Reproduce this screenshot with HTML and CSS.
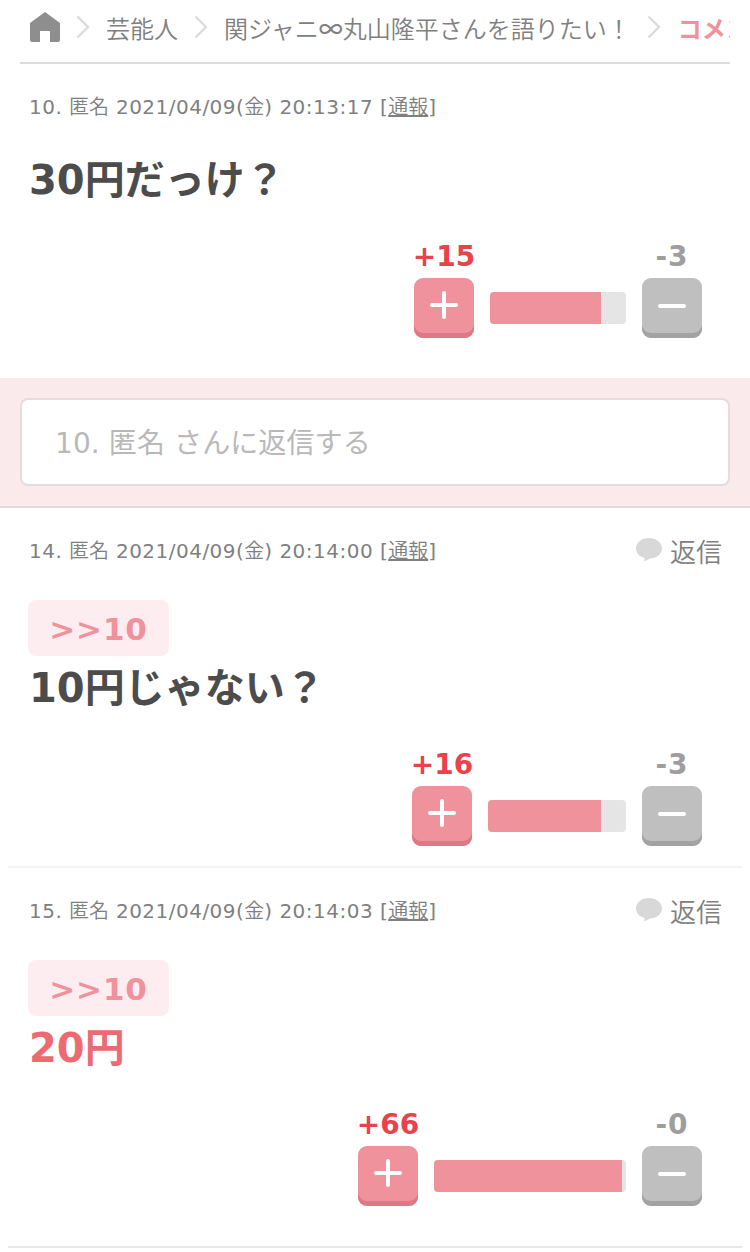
FILE: index.html
```html
<!DOCTYPE html>
<html lang="ja">
<head>
    <meta charset="UTF-8">
    <meta name="viewport" content="width=device-width, initial-scale=1.0">
    <title>関ジャニ∞丸山隆平さんを語りたい！</title>
    <link rel="stylesheet" href="styles.css">
</head>
<body>
    <svg class="sprite">
        <symbol id="home" viewBox="0 0 30 30">
            <path d="M15 0 L30 11 V28 Q30 30 28 30 H20 V19 H10 V30 H2 Q0 30 0 28 V11 Z" fill="#8e8e8e"/>
        </symbol>
        <symbol id="arrow" viewBox="0 0 14 24">
            <path d="M1.5 1.5 L12 12 L1.5 22.5" fill="none" stroke="#dcdcdc" stroke-width="2.4"/>
        </symbol>
        <symbol id="balloon" viewBox="0 0 26 23">
            <path d="M13 0 C20 0 26 4.5 26 10.5 C26 16.5 20 20.5 13.5 20.5 C12 21.8 10 22.8 7.5 23 C8.3 22 8.7 21 8.6 20 C3.5 18.5 0 15 0 10.5 C0 4.5 6 0 13 0 Z" fill="#d8d8d8"/>
        </symbol>
        <symbol id="plus" viewBox="0 0 28 28">
            <path d="M2 14 H26 M14 2 V26" stroke="#fff" stroke-width="4" stroke-linecap="round"/>
        </symbol>
        <symbol id="minus" viewBox="0 0 28 28">
            <path d="M2 15 H26" stroke="#fff" stroke-width="4" stroke-linecap="round"/>
        </symbol>
    </svg>

    <nav class="breadcrumb">
        <svg class="home"><use href="#home"/></svg>
        <svg class="arrow"><use href="#arrow"/></svg>
        <a>芸能人</a>
        <svg class="arrow"><use href="#arrow"/></svg>
        <a>関ジャニ<span class="infinity">∞</span>丸山隆平さんを語りたい！</a>
        <svg class="arrow"><use href="#arrow"/></svg>
        <a class="current">コメント</a>
    </nav>

    <div class="comment main-comment">
        <div class="comment-head">
            <p class="info">10. <span>匿名</span> 2021/04/09(<span>金</span>) 20:13:17 [<a>通報</a>]</p>
        </div>
        <div class="body">30円だっけ？</div>
        <div class="votes">
            <div class="vote plus">
                <span>+15</span>
                <button><svg><use href="#plus"/></svg></button>
            </div>
            <div class="bar" style="width: 136px"><div style="width: 111px"></div></div>
            <div class="vote minus">
                <span>-3</span>
                <button><svg><use href="#minus"/></svg></button>
            </div>
        </div>
    </div>

    <form class="reply-form">
        <input type="text" placeholder="10. 匿名 さんに返信する">
    </form>

    <div class="comment">
        <div class="comment-head">
            <p class="info">14. <span>匿名</span> 2021/04/09(<span>金</span>) 20:14:00 [<a>通報</a>]</p>
            <a class="reply"><svg><use href="#balloon"/></svg>返信</a>
        </div>
        <a class="anchor">&gt;&gt;10</a>
        <div class="body">10円じゃない？</div>
        <div class="votes">
            <div class="vote plus">
                <span>+16</span>
                <button><svg><use href="#plus"/></svg></button>
            </div>
            <div class="bar" style="width: 138px"><div style="width: 113px"></div></div>
            <div class="vote minus">
                <span>-3</span>
                <button><svg><use href="#minus"/></svg></button>
            </div>
        </div>
    </div>

    <div class="comment last">
        <div class="comment-head">
            <p class="info">15. <span>匿名</span> 2021/04/09(<span>金</span>) 20:14:03 [<a>通報</a>]</p>
            <a class="reply"><svg><use href="#balloon"/></svg>返信</a>
        </div>
        <a class="anchor">&gt;&gt;10</a>
        <div class="body popular">20円</div>
        <div class="votes">
            <div class="vote plus">
                <span>+66</span>
                <button><svg><use href="#plus"/></svg></button>
            </div>
            <div class="bar" style="width: 192px"><div style="width: 188px"></div></div>
            <div class="vote minus">
                <span>-0</span>
                <button><svg><use href="#minus"/></svg></button>
            </div>
        </div>
    </div>
</body>
</html>
```
FILE: styles.css
```css
* {
    box-sizing: border-box;
}

body {
    margin: 0;
    background: #fff;
    color: #808080;
    font-family: "DejaVu Sans", "Noto Sans CJK JP", sans-serif;
    overflow: hidden;
}

p {
    margin: 0;
}

.sprite {
    display: none;
}

.breadcrumb {
    display: flex;
    height: 64px;
    margin: 0 20px;
    padding: 0 0 8px 10px;
    align-items: center;
    border-bottom: 2px solid #ddd;
    overflow: hidden;
    white-space: nowrap;
    font-family: "Noto Sans CJK JP", sans-serif;
    font-size: 24px;
    font-weight: 350;
}

.breadcrumb svg {
    flex: none;
}

.breadcrumb .home {
    width: 30px;
    height: 30px;
}

.breadcrumb .arrow {
    width: 14px;
    height: 24px;
    margin: 0 16px;
}

.breadcrumb .infinity {
    font-weight: 500;
}

.breadcrumb .current {
    margin-left: 1px;
    color: #ef929b;
    font-weight: bold;
}

.comment {
    margin: 0 8px;
    padding: 28px 20px 20px;
    border-bottom: 2px solid #f4f4f4;
}

.main-comment {
    padding-bottom: 40px;
    border-bottom: 0;
}

.last {
    padding-bottom: 40px;
    border-bottom-color: #e8e8e8;
}

.comment-head {
    display: flex;
    justify-content: space-between;
    height: 30px;
    margin-bottom: 26px;
    line-height: 30px;
}

.info {
    padding-left: 1px;
    font-size: 20px;
    letter-spacing: 0.48px;
    white-space: nowrap;
}

.info span,
.info a {
    font-family: "Noto Sans CJK JP", sans-serif;
    font-weight: 350;
    line-height: 1;
    letter-spacing: 0;
}

.info a {
    text-decoration: underline;
}

.reply {
    display: flex;
    font-family: "Noto Sans CJK JP", sans-serif;
    font-size: 26px;
    font-weight: 350;
    gap: 8px;
}

.reply svg {
    width: 26px;
    height: 23px;
    margin-top: 2px;
}

.anchor {
    display: block;
    width: 141px;
    height: 56px;
    margin-top: 34px;
    border-radius: 8px;
    background: #fdedf1;
    color: #ef929b;
    font-size: 31px;
    font-weight: bold;
    line-height: 58px;
    letter-spacing: 0.8px;
    text-align: center;
}

.body {
    height: 64px;
    padding-left: 1px;
    color: #4c4c4c;
    font-size: 40px;
    font-weight: bold;
    line-height: 64px;
}

.popular {
    color: #ec6b73;
}

.votes {
    display: flex;
    justify-content: flex-end;
    align-items: flex-end;
    gap: 16px;
    margin: 31px 20px 0 0;
}

.vote {
    display: flex;
    flex-direction: column;
    align-items: center;
    width: 60px;
    gap: 7px;
    font-size: 28px;
    font-weight: bold;
    line-height: 28px;
    white-space: nowrap;
}

.vote button {
    display: flex;
    justify-content: center;
    width: 60px;
    height: 60px;
    padding: 13px 0 0;
    border: 0;
    border-radius: 9px;
}

.vote svg {
    width: 28px;
    height: 28px;
}

.plus {
    color: #e8434b;
}

.plus button {
    background: #ef929b;
    box-shadow: inset 0 -5px #dd7987;
}

.minus {
    color: #9e9e9e;
    letter-spacing: 1px;
}

.minus button {
    background: #bfbfbf;
    box-shadow: inset 0 -5px #a3a3a3;
}

.bar {
    height: 32px;
    margin-bottom: 14px;
    border-radius: 4px;
    background: #e5e5e5;
    overflow: hidden;
}

.bar div {
    height: 100%;
    background: #ef929b;
}

.reply-form {
    padding: 20px;
    height: 130px;
    background: #faeaeb;
    border-bottom: 2px solid #ddd;
}

.reply-form input {
    display: block;
    width: 100%;
    height: 88px;
    padding: 3px 33px 0;
    border: 2px solid #eadadd;
    border-bottom-color: #e0dde0;
    border-radius: 8px;
    background: #fff;
    font-family: inherit;
    font-size: 28px;
    letter-spacing: 0.1px;
}

.reply-form input::placeholder {
    color: #b9b9b9;
}
```
